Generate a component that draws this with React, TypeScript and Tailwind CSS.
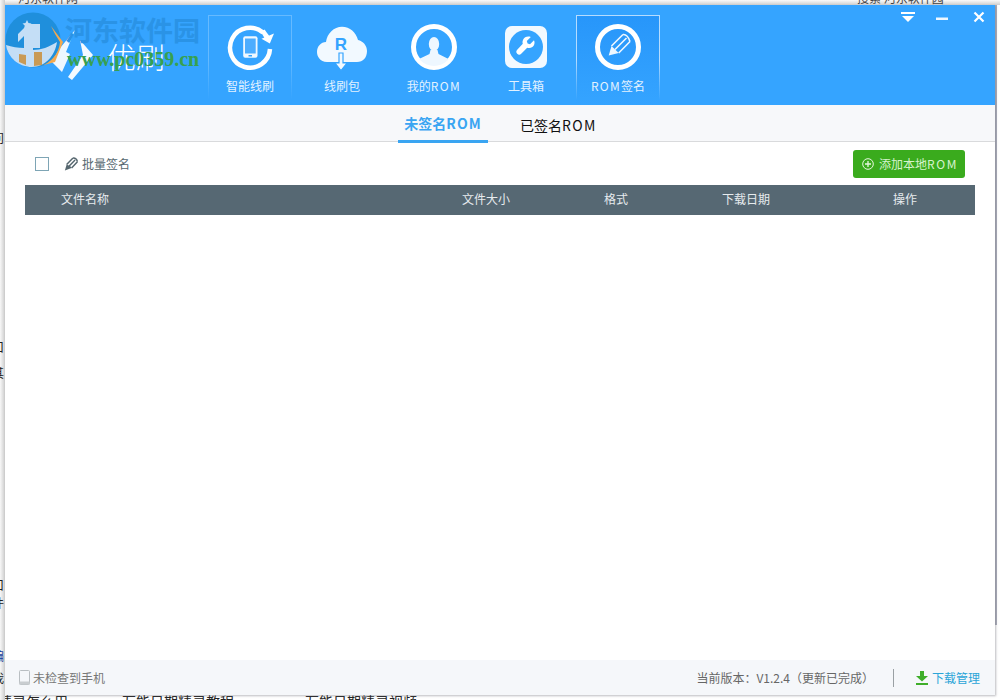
import React from "react";

const font = { fontFamily: '"Noto Sans CJK SC", "Liberation Sans", sans-serif' };

function SyncPhone() {
  return (
    <svg width="48" height="48" viewBox="0 0 48 48" fill="none" className="overflow-visible">
      <path d="M37 9.500A20 20 0 1 0 44 26" stroke="#fff" strokeWidth="4.500" />
      <path d="M35.500 15.800 L48 10.500 L43.800 20.500 Z" fill="#fff" strokeLinejoin="round" />
      <path d="M35 9 L38.500 6.500 L44 14 L39 16 Z" fill="#fff" />
      <rect x="17.200" y="13.200" width="14.300" height="21.600" rx="2" fill="#f0f8ff" />
      <rect x="19" y="15.500" width="10.700" height="15" fill="#4dadff" />
      <rect x="22.500" y="32" width="3.500" height="1.500" fill="#35a4ff" />
    </svg>
  );
}
function CloudR() {
  return (
    <svg width="52" height="48" viewBox="0 0 52 48" className="overflow-visible">
      <g transform="translate(0,1.500) scale(1,1.100)">
        <path d="M11 34C4 34 1 29 1 25c0-5 4-9 9-9 1-8 8-14 16-14 8 0 14 5 16 12 5 1 9 5 9 10 0 6-4 10-10 10Z" fill="#f2f9ff" />
      </g>
      <text x="25" y="27" textAnchor="middle" fontSize="17" fontWeight="700" fill="#35a4ff" fontFamily="Liberation Sans">R</text>
      <path d="M23 30h4v10h4l-6 7.500-6-7.500h4Z" fill="#f2f9ff" stroke="#35a4ff" strokeWidth="1.200" />
    </svg>
  );
}
function UserRing() {
  return (
    <svg width="48" height="48" viewBox="0 0 48 48">
      <defs>
        <clipPath id="ringclip"><circle cx="24" cy="24" r="19" /></clipPath>
      </defs>
      <circle cx="24" cy="24" r="20.500" fill="none" stroke="#fff" strokeWidth="5" />
      <g clipPath="url(#ringclip)" fill="#eef7ff">
        <ellipse cx="24" cy="21" rx="5.200" ry="7" />
        <path d="M20.500 27h7l1 4 10 5v9H9v-9l10.500-5Z" />
      </g>
    </svg>
  );
}
function Tools() {
  return (
    <svg width="44" height="44" viewBox="0 0 44 44">
      <rect x="1" y="1" width="42" height="42" rx="7" fill="#f2f9ff" />
      <circle cx="22" cy="22" r="17" fill="#35a4ff" />
      <g transform="translate(22 22) scale(0.800) translate(-22 -21)">
        <path d="M32 12.500l-5 5-3-1-1-3 5-5c-4-1.500-8 0-9.500 3-1 2-1 4-.5 5.500L11 24.500c-1.500 1.500-1.500 3.500 0 5s3.500 1.500 5 0l7.500-7.500c2 .5 4.500.5 6.500-1 2.500-2 3.500-5.500 2-8.500Z" fill="#fff" />
      </g>
    </svg>
  );
}
function PenRing() {
  return (
    <svg width="48" height="48" viewBox="0 0 48 48" fill="none">
      <circle cx="24" cy="24" r="20.500" stroke="#fff" strokeWidth="5" />
      <path d="M14.700 32.500 L17.500 23 L24.700 30 Z" fill="#eef7ff" />
      <path d="M17.500 23 L29 11.500 M21 26.500 L32.500 15 M24.700 30 L36 18.500 M29 11.500 Q33.500 11 36 18.500" stroke="#eef7ff" strokeWidth="1.600" />
    </svg>
  );
}

function Rom({ spacing }: { spacing: string }) {
  return <span className={spacing}>ROM</span>;
}

function NavItem({ label, icon, active, frame }: { label: React.ReactNode; icon: React.ReactNode; active?: boolean; frame?: boolean }) {
  return (
    <div className={`relative flex h-[90px] w-[84px] flex-col items-center ${active ? "bg-gradient-to-b from-[#2796fa] to-[#35a4ff]" : ""}`}>
      {(active || frame) && (
        <div
          className={`absolute inset-0 border border-b-0 ${active ? "border-[#b5dcff]" : "border-[#66baff]"} [mask-image:linear-gradient(to_bottom,black_50%,transparent_95%)]`}
        />
      )}
      <div className="mt-[8px] flex h-[48px] items-center justify-center">{icon}</div>
      <div className="mt-[6px] text-[12px] leading-[18px] text-[#e3f2ff]">{label}</div>
    </div>
  );
}

function Watermark() {
  return (
    <div className="pointer-events-none absolute left-0 top-[7px] flex items-start">
      <svg width="58" height="56" viewBox="0 0 58 56">
        <circle cx="28" cy="28" r="27.500" fill="#1f8fdc" />
        <path d="M35 54 A27 27 0 0 0 55 30 L50 22 L46 14 L58 30 L50 50 Z" fill="#f4a94f" />
        <path d="M1 33c6 2 12 3 18 3V24l-6 6V22l10-10h5v26c8 0 16-3 24-8-2 14-12 25-25 25C14 55 3 46 1 33Z" fill="#c4def6" />
        <path d="M27 12h8v24h-8Z" fill="#c4def6" />
        <path d="M29 40h8v13l-8 1Z M14 42l7 1v10l-7-3Z" fill="#c99a55" />
        <path d="M22 8l1.500 3 3 .5-2.200 2 .5 3-2.800-1.500-2.800 1.500.5-3-2.200-2 3-.5Z" fill="#c4def6" />
      </svg>
      <div className="ml-[2px] flex flex-col">
        <div className="text-[27px] font-bold leading-[36px] text-[#2a93e6]" style={{ fontFamily: '"Noto Sans CJK SC", serif' }}>
          河东软件园
        </div>
        <div className="ml-[2px] mt-[1px] text-[20px] font-bold leading-[20px] text-[#37a04f]" style={{ fontFamily: '"Liberation Serif", serif' }}>
          www.pc0359.cn
        </div>
      </div>
    </div>
  );
}

function Logo() {
  return (
    <div className="flex w-[203px] items-start pl-[43px]">
      <svg width="50" height="56" viewBox="0 0 50 56" className="mt-[23px] shrink-0">
        <path d="M27 2 L2 32 L14 44 L22 26 L18 24 Z" fill="#eef7ff" />
        <path d="M32 12 L45 27 L24 52 L20 49 L35 27 Z" fill="#f4faff" />
      </svg>
      <div className="ml-[9px] mt-[33px] text-[29px] font-light leading-[36px] text-white">优刷</div>
    </div>
  );
}

function WindowButtons() {
  return (
    <div className="absolute right-[10px] top-[6px] flex items-center">
      <svg width="14" height="12" viewBox="0 0 14 12">
        <rect x="0" y="1" width="14" height="2" fill="#fff" />
        <path d="M1 5h12L7 11Z" fill="#fff" />
      </svg>
      <svg width="12" height="12" viewBox="0 0 12 12" className="ml-[21px]">
        <rect x="0" y="6.500" width="12" height="2.500" fill="#eef7ff" />
      </svg>
      <svg width="12" height="12" viewBox="0 0 12 12" className="ml-[25px]">
        <path d="M1.500 1.500l9 9M10.500 1.500l-9 9" stroke="#fff" strokeWidth="2.200" />
      </svg>
    </div>
  );
}

function EdgeGlyph({ className, children }: { className: string; children: React.ReactNode }) {
  return <span className={`absolute left-[-8px] text-[12px] leading-[14px] ${className}`}>{children}</span>;
}

export default function App() {
  return (
    <div className="relative h-[700px] w-[1000px] overflow-hidden bg-white" style={font}>
      {/* page behind the window */}
      <div className="absolute left-0 top-0 h-[5px] w-full bg-gradient-to-b from-[#fafafa] to-[#cfcfcf]" />
      <div className="absolute left-0 top-[-10px] h-[15px] w-full text-[12px] leading-[15px] text-[#444]">
        <span className="absolute left-[18px]">河东软件网</span>
        <span className="absolute left-[857px]">搜索 河东软件园</span>
      </div>
      <div className="absolute left-0 top-[693px] h-[12px] w-full text-[14px] leading-[16px] text-[#222]">
        <span className="absolute left-[-2px]">精灵怎么用</span>
        <span className="absolute left-[122px]">万能日期精灵教程</span>
        <span className="absolute left-[305px]">万能日期精灵视频</span>
      </div>

      <div className="absolute inset-y-0 left-0 w-[5px] overflow-hidden bg-gradient-to-r from-[#f8f8f8] to-[#cdcdcd] text-[#222]">
        <EdgeGlyph className="top-[131px]">问</EdgeGlyph>
        <EdgeGlyph className="top-[340px]">口</EdgeGlyph>
        <EdgeGlyph className="top-[366px]">其</EdgeGlyph>
        <EdgeGlyph className="top-[578px]">口</EdgeGlyph>
        <EdgeGlyph className="top-[596px]">件</EdgeGlyph>
        <EdgeGlyph className="top-[649px] text-[#1a3f9c]">编</EdgeGlyph>
        <EdgeGlyph className="top-[671px]">我</EdgeGlyph>
      </div>
      <div className="absolute right-[3px] top-[5px] h-[620px] w-[2px] bg-[#a8abb8]" />

      {/* window */}
      <div className="absolute left-[5px] top-[5px] flex h-[690px] w-[990px] flex-col bg-white shadow-[1px_1px_2px_rgba(120,120,130,0.5)]">
        <header className="relative flex h-[100px] shrink-0 bg-[#35a4ff]">
          <Logo />
          <nav className="mt-[10px] flex gap-[8px]">
            <NavItem label="智能线刷" icon={<SyncPhone />} frame />
            <NavItem label="线刷包" icon={<CloudR />} />
            <NavItem label={<>我的<Rom spacing="tracking-[1.4px]" /></>} icon={<UserRing />} />
            <NavItem label="工具箱" icon={<Tools />} />
            <NavItem label={<><Rom spacing="tracking-[1.2px]" />签名</>} icon={<PenRing />} active />
          </nav>
          <WindowButtons />
        </header>

        <Watermark />

        <div className="flex h-[37px] shrink-0 items-stretch justify-start border-b border-[#d9dadc] bg-[#f7f8fa] pl-[393px]">
          <div className="h-[38px] w-[90px] border-b-[3px] border-[#3aa5f2] text-center text-[14px] font-bold leading-[36px] text-[#3aa5f2]">
            未签名<Rom spacing="tracking-[1px]" />
          </div>
          <div className="ml-[32px] text-[14px] leading-[41px] text-[#111]">
            已签名<Rom spacing="tracking-[1.3px]" />
          </div>
        </div>

        <div className="flex h-[43px] shrink-0 items-center px-[30px]">
          <div className="h-[14px] w-[14px] border border-[#7ea5b5] bg-white" />
          <svg width="14" height="14" viewBox="0 0 48 48" fill="none" className="ml-[15px]">
            <path d="M3 46 L9 26 L24 33 L26 38 Z" fill="#56676f" />
            <path d="M9 26 L30 4 M17 32 L38 10 M26 38 L46 16 M30 4 Q42 2 46 16" stroke="#56676f" strokeWidth="5" />
          </svg>
          <span className="ml-[4px] text-[12px] text-[#56676f]">批量签名</span>
          <button className="ml-auto flex h-[28px] w-[112px] items-center rounded-[3px] bg-[#3aab1d] pl-[9px] text-[12px] text-[#d6f2cd]">
            <svg width="12" height="12" viewBox="0 0 12 12" fill="none">
              <circle cx="6" cy="6" r="5.300" stroke="#e6f7df" strokeWidth="1" />
              <path d="M6 3v6M3 6h6" stroke="#e6f7df" strokeWidth="1.300" />
            </svg>
            <span className="ml-[5px] mt-[1px]">添加本地<Rom spacing="tracking-[1.6px]" /></span>
          </button>
        </div>

        <div className="mx-[20px] grid h-[30px] shrink-0 grid-cols-[401px_142px_118px_171px_1fr] items-center bg-[#566873] pb-[2px] pl-[36px] text-[12px] text-[#e6ebee]">
          <span>文件名称</span>
          <span>文件大小</span>
          <span>格式</span>
          <span>下载日期</span>
          <span>操作</span>
        </div>

        <div className="flex-1" />

        <footer className="flex h-[35px] shrink-0 items-center bg-[#f5f7fa] pl-[14px] pr-[15px] text-[12px]">
          <svg width="11" height="15" viewBox="0 0 11 15" fill="none">
            <rect x="0.500" y="0.500" width="10" height="14" rx="1" fill="#f5f7fa" stroke="#b9bec2" />
            <rect x="0.500" y="11.500" width="10" height="3" fill="#c9cdd0" />
          </svg>
          <span className="ml-[3px] text-[#777]">未检查到手机</span>
          <span className="ml-auto text-[#666]">当前版本：V1.2.4（更新已完成）</span>
          <div className="ml-[19px] h-[18px] w-px bg-[#9aa0a4]" />
          <svg width="12" height="14" viewBox="0 0 12 14" className="ml-[22px]">
            <path d="M4 0h4v5h4L6 10.500 0 5h4Z" fill="#3fae2a" />
            <rect x="0" y="12" width="12" height="2" fill="#3fae2a" />
          </svg>
          <span className="ml-[4px] text-[#2ba5d8]">下载管理</span>
        </footer>
      </div>
    </div>
  );
}
